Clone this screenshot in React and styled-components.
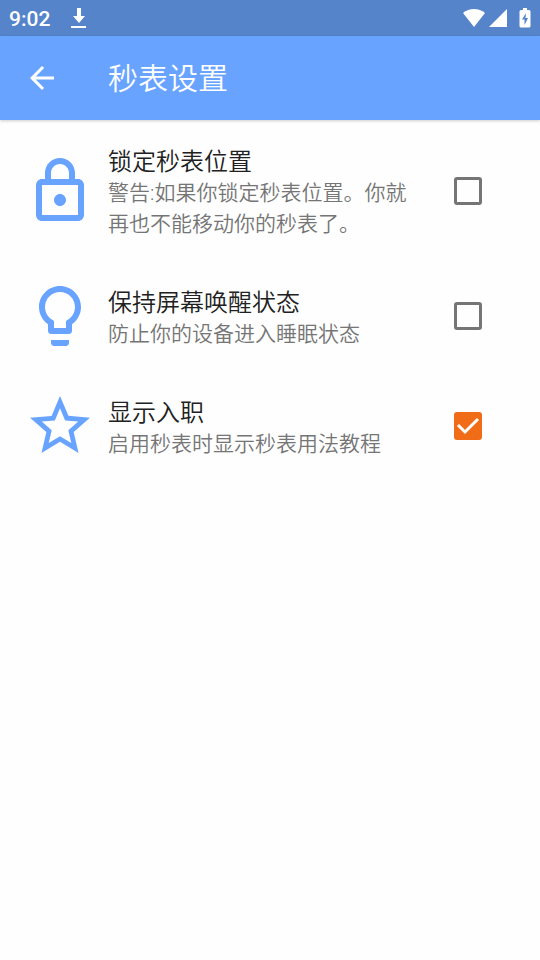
import React, { useState } from "react";
import styled, { createGlobalStyle } from "styled-components";

const settings = [
	{
		id: "lock",
		icon: "M18 8h-1V6c0-2.76-2.24-5-5-5S7 3.24 7 6v2H6c-1.1 0-2 .9-2 2v10c0 1.1.9 2 2 2h12c1.1 0 2-.9 2-2V10c0-1.1-.9-2-2-2zM9 6c0-1.66 1.34-3 3-3s3 1.34 3 3v2H9V6zm9 14H6V10h12v10zm-6-3c1.1 0 2-.9 2-2s-.9-2-2-2-2 .9-2 2 .9 2 2 2z",
		title: "锁定秒表位置",
		text: "警告:如果你锁定秒表位置。你就再也不能移动你的秒表了。",
		on: false,
	},
	{
		id: "awake",
		icon: "M9 21c0 .55.45 1 1 1h4c.55 0 1-.45 1-1v-1H9v1zm3-19C8.14 2 5 5.14 5 9c0 2.38 1.19 4.47 3 5.74V17c0 .55.45 1 1 1h6c.55 0 1-.45 1-1v-2.26c1.81-1.27 3-3.36 3-5.74 0-3.86-3.14-7-7-7zm2.85 11.1l-.85.6V16h-4v-2.3l-.85-.6C7.8 12.16 7 10.63 7 9c0-2.76 2.24-5 5-5s5 2.24 5 5c0 1.63-.8 3.16-2.15 4.1z",
		title: "保持屏幕唤醒状态",
		text: "防止你的设备进入睡眠状态",
		on: false,
	},
	{
		id: "onboarding",
		icon: "M22 9.24l-7.19-.62L12 2 9.19 8.63 2 9.24l5.46 4.73L5.82 21 12 17.27 18.18 21l-1.63-7.03L22 9.24zM12 15.4l-3.76 2.27 1-4.28-3.32-2.88 4.38-.38L12 6.1l1.71 4.04 4.38.38-3.32 2.88 1 4.28L12 15.4z",
		title: "显示入职",
		text: "启用秒表时显示秒表用法教程",
		on: true,
	},
];

function StatusBar() {
	return (
		<StatusWrapper>
			<Clock>9:02</Clock>
			<svg width='16' height='21' viewBox='0 0 16 21' fill='currentColor'>
				<path d='M6 0h4v8h4l-6 7-6-7h4z' />
				<path d='M0 18h15v2H0z' />
			</svg>
			<StatusIcons>
				<svg width='24' height='20' viewBox='0 0 24 20' fill='currentColor'>
					<path d='M12 19L1 5c3-2.600 7-4 11-4s8 1.400 11 4z' />
				</svg>
				<svg width='20' height='20' viewBox='0 0 20 20' fill='currentColor'>
					<path d='M19 1v18H1z' />
				</svg>
				<svg width='12' height='20' viewBox='0 0 12 20'>
					<path
						d='M4 0h4v2h2q1.500 0 1.500 1.500v14.500q0 1.500-1.500 1.500H2q-1.500 0-1.500-1.500V3.500Q.5 2 2 2h2z'
						fill='currentColor'
					/>
					<path d='M7 5L3 11.500h2.500V17L9 10H6.500z' fill='#5584cb' />
				</svg>
			</StatusIcons>
		</StatusWrapper>
	);
}

function SettingRow({ id, icon, title, text, on }) {
	const [checked, setChecked] = useState(on);

	return (
		<Row htmlFor={id}>
			<RowIcon viewBox='0 0 24 24' aria-hidden='true'>
				<path d={icon} />
			</RowIcon>
			<RowText>
				<RowTitle>{title}</RowTitle>
				<RowDescription>{text}</RowDescription>
			</RowText>
			<CheckWrapper>
				<Checkbox
					id={id}
					type='checkbox'
					checked={checked}
					onChange={(e) => setChecked(e.target.checked)}
				/>
				{checked && (
					<Tick viewBox='0 0 28 28' aria-hidden='true'>
						<path d='M4 13l7 7L24 7' />
					</Tick>
				)}
			</CheckWrapper>
		</Row>
	);
}

function App() {
	return (
		<>
			<GlobalStyle />
			<StatusBar />
			<Header>
				<BackButton type='button' aria-label='返回'>
					<svg width='36' height='36' viewBox='0 0 24 24' fill='currentColor'>
						<path d='M20 11H7.830l5.590-5.590L12 4l-8 8 8 8 1.410-1.410L7.830 13H20v-2z' />
					</svg>
				</BackButton>
				<HeaderTitle>秒表设置</HeaderTitle>
			</Header>
			<main>
				{settings.map((item) => (
					<SettingRow key={item.id} {...item} />
				))}
			</main>
		</>
	);
}

const GlobalStyle = createGlobalStyle`
	* {
		box-sizing: border-box;
	}

	body {
		margin: 0;
		min-height: 100vh;
		background-color: #fefefe;
		font-family: Roboto, "Noto Sans CJK SC", sans-serif;
		font-weight: 350;
	}
`;

const StatusWrapper = styled.div`
	display: flex;
	align-items: center;
	height: 36px;
	padding: 0 9px;
	color: #fff;
	background-color: #5584cb;
`;

const Clock = styled.span`
	margin-right: 21px;
	padding-top: 2px;
	font-size: 21px;
	font-weight: 500;
`;

const StatusIcons = styled.div`
	display: flex;
	align-items: center;
	gap: 2px;
	margin-left: auto;

	svg:last-child {
		margin-left: 9px;
	}
`;

const Header = styled.header`
	display: flex;
	align-items: center;
	gap: 48px;
	height: 84px;
	padding: 0 24px;
	color: #fff;
	background-color: #68a4ff;
	box-shadow: 0 1px 3px rgba(0, 0, 0, 0.2);
`;

const BackButton = styled.button`
	display: flex;
	padding: 0;
	border: 0;
	color: inherit;
	background: none;
	cursor: pointer;
`;

const HeaderTitle = styled.h1`
	margin: 0;
	padding-top: 2px;
	font-size: 30px;
	font-weight: inherit;
	line-height: 36px;
`;

const Row = styled.label`
	display: flex;
	align-items: center;
	padding: 21px 58px 21px 24px;
	cursor: pointer;
`;

const RowIcon = styled.svg`
	flex: none;
	width: 72px;
	height: 72px;
	/* the icon is taller than a one-line row, so it must not stretch it */
	margin: -6px 12px -6px 0;
	fill: #68a4ff;
`;

const RowText = styled.div`
	flex: 1;
	min-width: 0;
	padding: 5px 30px 0 0;
`;

const RowTitle = styled.div`
	color: #212121;
	font-size: 24px;
	line-height: 32px;
`;

const RowDescription = styled.div`
	color: #757575;
	font-size: 21px;
	line-height: 31px;
`;

const CheckWrapper = styled.span`
	position: relative;
	display: flex;
	flex: none;
`;

const Checkbox = styled.input`
	appearance: none;
	width: 28px;
	height: 28px;
	margin: 0;
	border: 3px solid ${(props) => (props.checked ? "#f06c16" : "#757575")};
	border-radius: 3px;
	background-color: ${(props) => (props.checked ? "#f06c16" : "transparent")};
	cursor: pointer;
`;

const Tick = styled.svg`
	position: absolute;
	inset: 0;
	fill: none;
	stroke: #fff;
	stroke-width: 3;
	pointer-events: none;
`;

export default App;
